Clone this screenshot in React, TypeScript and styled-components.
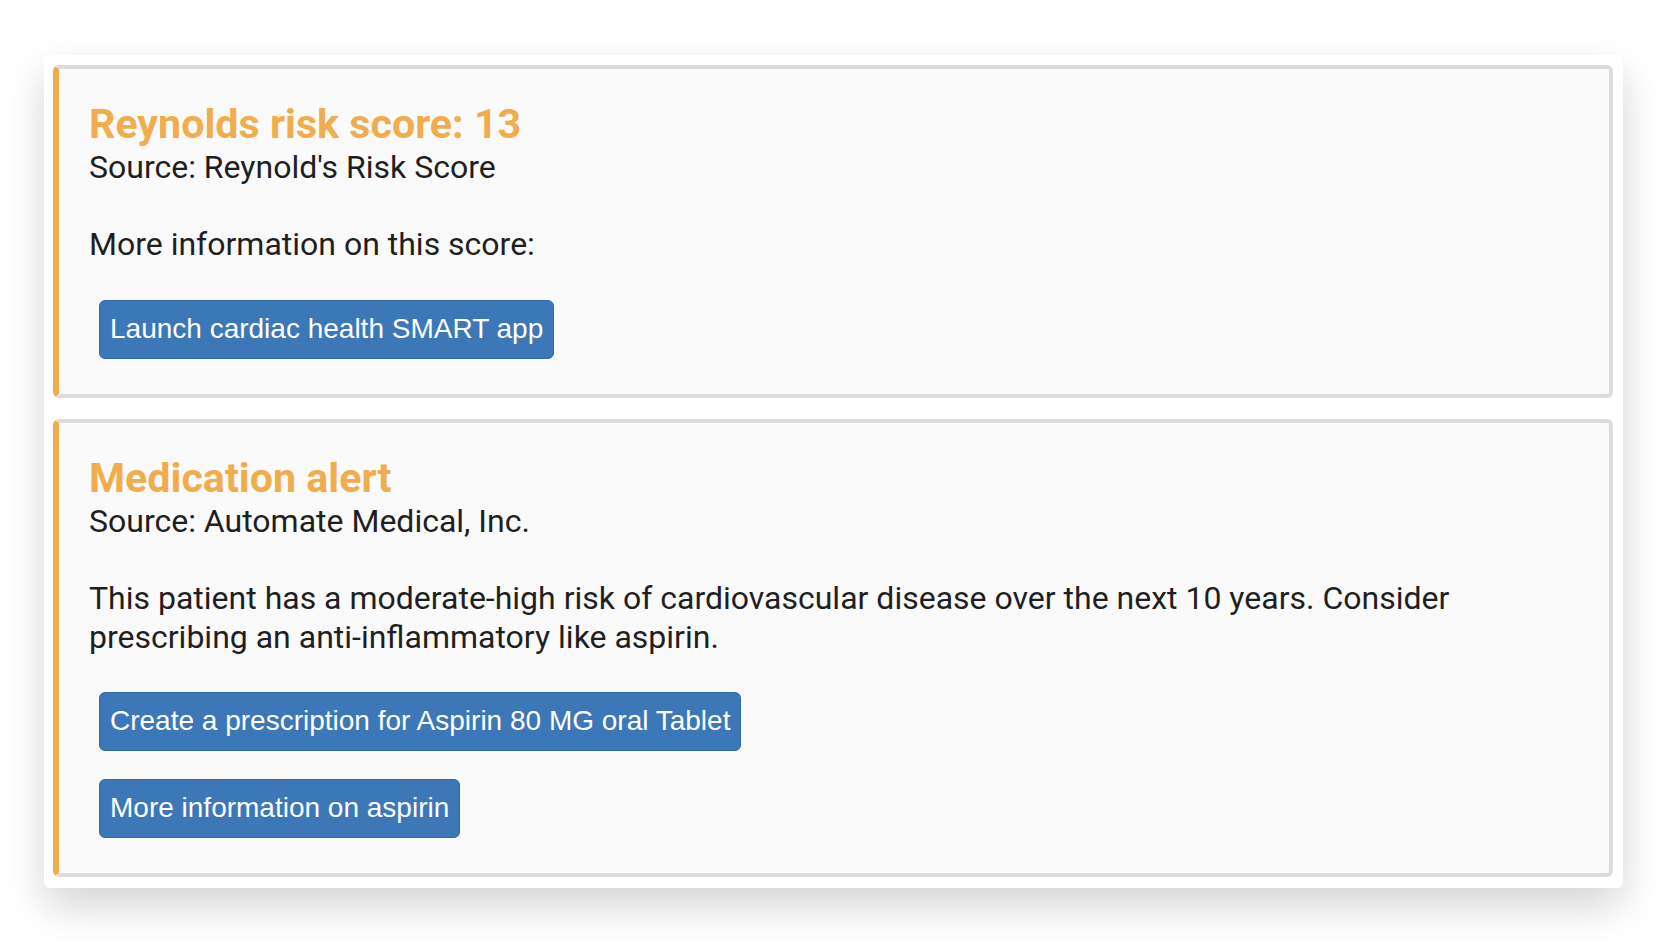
import React from "react";
import styled, { createGlobalStyle } from "styled-components";

const GlobalStyle = createGlobalStyle`
  html, body {
    margin: 0;
    padding: 0;
    background: #ffffff;
  }
  body {
    font-family: Roboto, "Noto Sans", Arial, sans-serif;
    color: #1f1f1f;
  }
`;

const Page = styled.div`
  padding: 55px 45px 50px 44px;
`;

const Panel = styled.div`
  background: #ffffff;
  border-radius: 6px;
  box-shadow: 0 18px 42px rgba(0, 0, 0, 0.17);
  padding: 10px 10px 11px 9px;
  display: flex;
  flex-direction: column;
  gap: 21px;
`;

const Card = styled.section`
  background: #fafafa;
  border: 4px solid #dcdcdc;
  border-left: 6px solid #f0ad4e;
  border-radius: 6px;
  padding: 33px 30px 35px 30px;
`;

const Title = styled.h2`
  margin: 0;
  font-family: Roboto, Arial, sans-serif;
  font-weight: 700;
  font-size: 41.2px;
  line-height: 45px;
  color: #f0ad4e;
`;

const Source = styled.div`
  font-size: 32px;
  line-height: 38.4px;
  margin-top: 1px;
  margin-bottom: 39px;
`;

const Detail = styled.p`
  margin: 0 0 36px 0;
  font-size: 32px;
  line-height: 38.4px;
`;

const Actions = styled.div`
  display: flex;
  flex-direction: column;
  align-items: flex-start;
  gap: 28px;
  margin-left: 10px;
`;

const ActionButton = styled.button`
  font-family: "Liberation Sans", Arial, sans-serif;
  font-size: 28px;
  line-height: 40px;
  color: #ffffff;
  background: #3c77b8;
  border: 1px solid #2e6da4;
  border-radius: 6px;
  padding: 8px 10px 9px 10px;
  cursor: pointer;
`;

type CardData = {
  title: string;
  source: string;
  detail: string;
  actions: string[];
};

const cards: CardData[] = [
  {
    title: "Reynolds risk score: 13",
    source: "Source: Reynold's Risk Score",
    detail: "More information on this score:",
    actions: ["Launch cardiac health SMART app"],
  },
  {
    title: "Medication alert",
    source: "Source: Automate Medical, Inc.",
    detail:
      "This patient has a moderate-high risk of cardiovascular disease over the next 10 years. Consider prescribing an anti-inflammatory like aspirin.",
    actions: [
      "Create a prescription for Aspirin 80 MG oral Tablet",
      "More information on aspirin",
    ],
  },
];

export default function App() {
  return (
    <>
      <GlobalStyle />
      <Page>
        <Panel>
          {cards.map((c) => (
            <Card key={c.title}>
              <Title>{c.title}</Title>
              <Source>{c.source}</Source>
              <Detail>{c.detail}</Detail>
              <Actions>
                {c.actions.map((a) => (
                  <ActionButton key={a}>{a}</ActionButton>
                ))}
              </Actions>
            </Card>
          ))}
        </Panel>
      </Page>
    </>
  );
}
